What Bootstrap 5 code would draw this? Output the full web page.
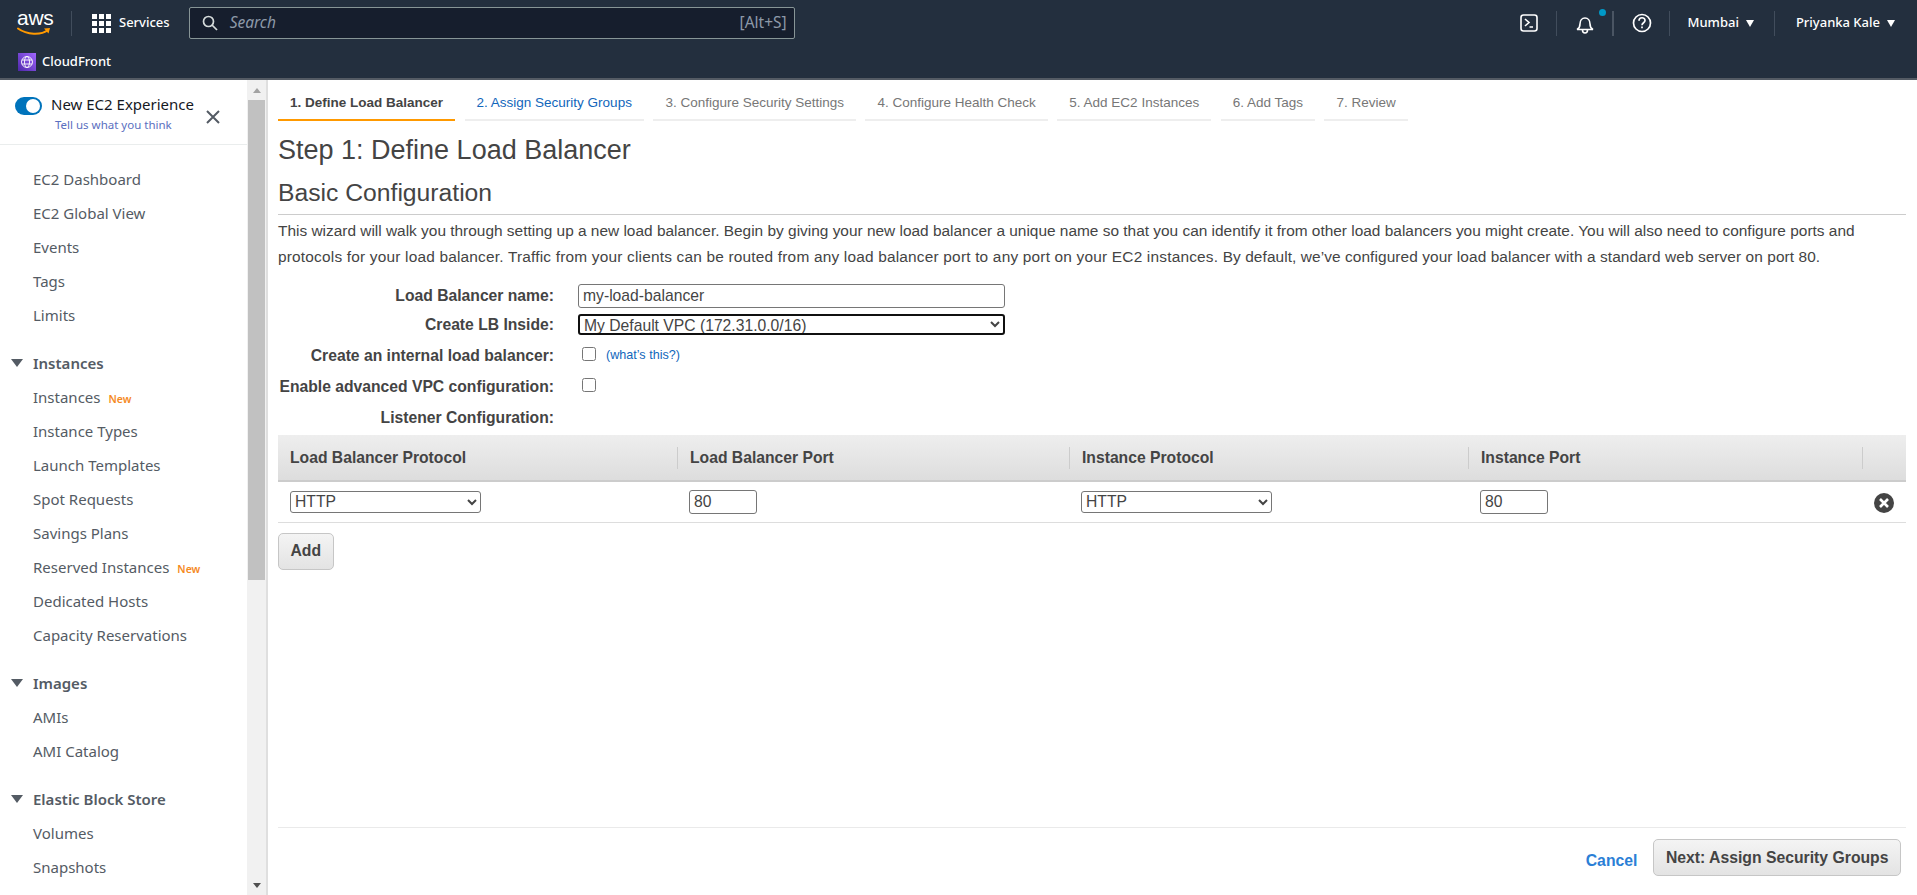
<!DOCTYPE html>
<html lang="en">
<head>
    <meta charset="UTF-8">
    <meta name="viewport" content="width=device-width, initial-scale=1.0">
    <title>Create Load Balancer</title>
    <link href="https://cdn.jsdelivr.net/npm/bootstrap@5.3.0/dist/css/bootstrap.min.css" rel="stylesheet">
    <style>
        html, body { height: 100%; overflow: hidden; }
        body { font-family: "Liberation Sans", Arial, sans-serif; color: #444; background: #fff; }
        .app-shell { height: 895px; }

        /* top bar */
        .top-bar { height: 80px; background: #232f3e; border-bottom: 2px solid #545b64; color: #fff; font-family: "Noto Sans", sans-serif; flex: none; }
        .top-row { height: 46px; }
        .sub-row { height: 32px; padding-left: 18px; font-size: 13px; font-weight: 500; }
        .aws-logo { width: 35px; margin-left: 17px; margin-top: -2px; line-height: 1; }
        .aws-word { display: block; font-family: "Liberation Sans", sans-serif; font-size: 21px; line-height: 17px; text-align: center; letter-spacing: -.3px; }
        .aws-smile { display: block; margin-top: 1px; }
        .bar-sep { width: 1px; height: 25px; background: #414d5c; flex: none; }
        .services-btn { font-size: 13px; font-weight: 500; }
        .search-box { width: 606px; height: 32px; background: #161e2d; border: 1px solid #879596; border-radius: 2px; font-size: 15.5px; color: #8d99a8; margin-left: 19px; padding: 0 7px 0 12px; }
        .search-word { font-style: italic; margin-left: 12px; }
        .user-menu { font-size: 13px; font-weight: 500; }
        .caret-down { width: 0; height: 0; border-left: 4.5px solid transparent; border-right: 4.5px solid transparent; border-top: 7px solid currentColor; display: inline-block; flex: none; }
        .bell-wrap { position: relative; width: 18px; height: 18px; }
        .bell-dot { position: absolute; width: 7px; height: 7px; background: #0099c7; border-radius: 50%; right: -12px; top: -5px; }

        /* side nav */
        .side-nav { width: 247px; flex: none; overflow: hidden; font-family: "Noto Sans", sans-serif; color: #545b64; font-size: 15px; }
        .exp-box { height: 65px; border-bottom: 1px solid #eaeded; padding: 15px 0 0 15px; color: #16191f; }
        .exp-toggle { width: 27px; height: 18px; border-radius: 9px; background: #0073bb; position: relative; flex: none; margin: 2px 9px 0 0; }
        .exp-knob { position: absolute; width: 14px; height: 14px; background: #fff; border-radius: 50%; right: 2px; top: 2px; }
        .exp-title { font-size: 15px; line-height: 18px; white-space: nowrap; }
        .exp-link { font-size: 11.5px; line-height: 14px; margin: 5px 0 0 4px; color: #5a6fc0; display: block; text-decoration: none; white-space: nowrap; }
        .nav-stack { padding-top: 17px; }
        .nav-line { display: block; height: 34px; line-height: 34px; padding-left: 33px; color: #545b64; text-decoration: none; white-space: nowrap; }
        .nav-head { display: flex; align-items: center; height: 34px; margin-top: 14px; font-weight: 600; white-space: nowrap; padding-left: 11px; }
        .nav-head .caret-down { border-left-width: 6px; border-right-width: 6px; border-top-width: 8px; margin-right: 10px; }
        .new-tag { color: #f58a1f; font-size: 10.5px; font-weight: 600; margin-left: 8px; }

        /* scrollbar strip */
        .fake-scroll { width: 21px; flex: none; background: #f1f1f1; border-right: 2px solid #dfdfdf; padding: 0 1px 0 1px; }
        .fake-thumb { height: 480px; background: #c1c1c1; }
        .arrow-cell { height: 20px; }
        .arrow-up, .arrow-down { width: 0; height: 0; border-left: 4.5px solid transparent; border-right: 4.5px solid transparent; }
        .arrow-up { border-bottom: 5px solid #a3a3a3; }
        .arrow-down { border-top: 5px solid #505050; }

        /* wizard */
        .wizard-pane { padding: 0 11px 0 10px; min-width: 0; }
        .wizard-tabs { gap: 9.5px; height: 41px; flex: none; }
        .wizard-tab { padding: 5px 12px 0; height: 41px; line-height: 36px; font-size: 13.5px; color: #777; border-bottom: 2px solid #eee; white-space: nowrap; text-decoration: none; }
        .wizard-tab.is-current { color: #444; font-weight: 700; border-bottom-color: #f90; }
        .wizard-tab.is-next { color: #1166bb; }
        .step-title { font-size: 27px; font-weight: 400; margin: 14px 0 0; line-height: 31px; color: #444; }
        .section-title { font-size: 24.7px; font-weight: 400; margin: 13px 0 0; padding-bottom: 7px; line-height: 28px; border-bottom: 1px solid #ccc; color: #444; }
        .intro-text { font-size: 15.43px; line-height: 25.5px; margin: 3px 0 0; color: #444; }
        .intro-rest { letter-spacing: .19px; }
        .intro-tail { letter-spacing: .08px; }
        .form-lines { margin-top: 13px; }
        .form-line { display: flex; align-items: center; font-size: 15.7px; }
        .form-line > label { width: 276px; text-align: right; font-weight: 700; margin-right: 24px; flex: none; color: #444; white-space: nowrap; }
        .name-input { width: 427px; height: 24px; border: 1px solid #767676; border-radius: 3px; font: 15.7px "Liberation Sans", sans-serif; padding: 1px 4px; color: #444; }
        .vpc-select { width: 427px; height: 21px; border: 2px solid #101010; border-radius: 3px; font: 15.7px "Liberation Sans", sans-serif; color: #444; background: #fff; padding: 0; }
        .info-link { font-size: 12.6px; color: #1166bb; margin-left: 10px; text-decoration: none; }
        .form-line input[type=checkbox] { margin: 0 0 3px 4px; width: 14px; height: 14px; }

        .listener-table { width: 1628px; table-layout: fixed; margin: 2px 0 0; font-size: 15.7px; }
        .listener-table th { height: 46px; padding: 0; vertical-align: middle; background: linear-gradient(#eee, #ddd); border-bottom: 2px solid #ccc; color: #444; }
        .head-cell { border-left: 1px solid #ccc; height: 22px; line-height: 22px; padding-left: 12px; }
        .first-head { border-left-color: transparent; padding-left: 11px; }
        .listener-table td { height: 41px; padding: 0 0 0 12px; vertical-align: middle; border-bottom: 1px solid #ddd; }
        .proto-select { width: 191px; height: 22px; font: 15.7px "Liberation Sans", sans-serif; color: #444; background: #fff; border: 1px solid #767676; border-radius: 3px; padding: 0; display: block; }
        .port-input { width: 68px; height: 24px; font: 15.7px "Liberation Sans", sans-serif; color: #444; border: 1px solid #767676; border-radius: 3px; padding: 1px 4px; display: block; }
        .grey-btn { background: linear-gradient(#f4f4f4, #e3e3e3); border: 1px solid #c6c6c6; border-radius: 5px; color: #444; font-weight: 700; font-size: 15.75px; padding: 0 11.5px; height: 37px; }
        .add-row { margin-top: 10px; }
        .remove-cell { text-align: right; padding-right: 12px !important; }
        .wizard-foot { margin-top: auto; border-top: 1px solid #eaeaea; height: 68px; padding: 11px 5px 0 0; gap: 16px; flex: none; }
        .cancel-link { color: #2b7fd6; font-weight: 700; font-size: 15.75px; text-decoration: none; }
    </style>
</head>
<body>
<div class="app-shell d-flex flex-column">
    <!-- top bar -->
    <header class="top-bar">
        <div class="top-row d-flex align-items-center">
            <div class="aws-logo">
                <span class="aws-word">aws</span>
                <svg class="aws-smile" width="35" height="9" viewBox="0 0 35 9"><path d="M1 1.500C10 8 24 8.500 31 3" fill="none" stroke="#f90" stroke-width="2" stroke-linecap="round"/><path d="M27 1.500L33 1 31.500 6.500z" fill="#f90"/></svg>
            </div>
            <span class="bar-sep" style="margin-left:19px"></span>
            <svg style="margin-left:20px" width="19" height="19" viewBox="0 0 19 19" fill="#fff"><rect x="0" y="0" width="5" height="5"/><rect x="7" y="0" width="5" height="5"/><rect x="14" y="0" width="5" height="5"/><rect x="0" y="7" width="5" height="5"/><rect x="7" y="7" width="5" height="5"/><rect x="14" y="7" width="5" height="5"/><rect x="0" y="14" width="5" height="5"/><rect x="7" y="14" width="5" height="5"/><rect x="14" y="14" width="5" height="5"/></svg>
            <span class="services-btn" style="margin-left:8px">Services</span>
            <div class="search-box d-flex align-items-center">
                <svg width="16" height="16" viewBox="0 0 16 16" fill="none" stroke="#d5dbdb" stroke-width="1.700"><circle cx="6.500" cy="6.500" r="5"/><path d="M10 10l5 5"/></svg>
                <span class="search-word">Search</span>
                <span class="ms-auto">[Alt+S]</span>
            </div>
            <div class="user-menu d-flex align-items-center ms-auto">
                <svg width="18" height="18" viewBox="0 0 18 18" fill="none" stroke="#fff" stroke-width="1.600"><rect x="1" y="1" width="16" height="16" rx="2.500"/><path d="M5 5l4 3.500L5 12M9.500 13H13"/></svg>
                <span class="bar-sep" style="margin-left:18px"></span>
                <div class="bell-wrap" style="margin-left:19px">
                    <svg width="18" height="18" viewBox="0 0 18 18" fill="none" stroke="#fff" stroke-width="1.600"><path d="M1 13.500c2-1 3-2.500 3-5.500 0-3.500 2-6 5-6s5 2.500 5 6c0 3 1 4.500 3 5.500zM6.500 14c0 4 5 4 5 0"/></svg>
                    <span class="bell-dot"></span>
                </div>
                <span class="bar-sep" style="margin-left:18px;width:2px;background:#4a5563"></span>
                <svg style="margin-left:18px" width="20" height="20" viewBox="0 0 20 20" fill="none" stroke="#fff" stroke-width="1.700"><circle cx="10" cy="10" r="8.500"/><path d="M7 7.800c0-4 6-4 6-.3 0 2.300-3 2.300-3 4.800"/><path d="M10 13.500v1.800"/></svg>
                <span class="bar-sep" style="margin-left:17px"></span>
                <span style="margin-left:17px">Mumbai</span>
                <span class="caret-down" style="margin-left:7px"></span>
                <span class="bar-sep" style="margin-left:20px"></span>
                <span style="margin-left:21px">Priyanka Kale</span>
                <span class="caret-down" style="margin:0 22px 0 7px"></span>
            </div>
        </div>
        <div class="sub-row d-flex align-items-center">
            <svg width="18" height="18" viewBox="0 0 18 18"><defs><linearGradient id="cfGrad" x1="0" y1="1" x2="1" y2="0"><stop offset="0" stop-color="#4d27a8"/><stop offset="1" stop-color="#a166ff"/></linearGradient></defs><rect width="18" height="18" fill="url(#cfGrad)"/><g fill="none" stroke="#fff" stroke-width=".9"><circle cx="9" cy="9" r="5.500"/><ellipse cx="9" cy="9" rx="2.500" ry="5.500"/><path d="M4 7h10M4 11h10"/></g></svg>
            <span style="margin-left:6px">CloudFront</span>
        </div>
    </header>

    <div class="d-flex flex-grow-1" style="min-height:0">
        <!-- left nav -->
        <nav class="side-nav">
            <div class="exp-box d-flex">
                <span class="exp-toggle"><span class="exp-knob"></span></span>
                <div>
                    <div class="exp-title">New EC2 Experience</div>
                    <a class="exp-link" href="#">Tell us what you think</a>
                </div>
                <svg style="margin:14px 0 0 11px" width="16" height="16" viewBox="0 0 16 16" fill="none" stroke="#545b64" stroke-width="2"><path d="M2 2l12 12M14 2L2 14"/></svg>
            </div>
            <div class="nav-stack">
                <a class="nav-line" href="#">EC2 Dashboard</a>
                <a class="nav-line" href="#">EC2 Global View</a>
                <a class="nav-line" href="#">Events</a>
                <a class="nav-line" href="#">Tags</a>
                <a class="nav-line" href="#">Limits</a>
                <div class="nav-head"><span class="caret-down"></span>Instances</div>
                <a class="nav-line" href="#">Instances<span class="new-tag">New</span></a>
                <a class="nav-line" href="#">Instance Types</a>
                <a class="nav-line" href="#">Launch Templates</a>
                <a class="nav-line" href="#">Spot Requests</a>
                <a class="nav-line" href="#">Savings Plans</a>
                <a class="nav-line" href="#">Reserved Instances<span class="new-tag">New</span></a>
                <a class="nav-line" href="#">Dedicated Hosts</a>
                <a class="nav-line" href="#">Capacity Reservations</a>
                <div class="nav-head"><span class="caret-down"></span>Images</div>
                <a class="nav-line" href="#">AMIs</a>
                <a class="nav-line" href="#">AMI Catalog</a>
                <div class="nav-head"><span class="caret-down"></span>Elastic Block Store</div>
                <a class="nav-line" href="#">Volumes</a>
                <a class="nav-line" href="#">Snapshots</a>
                <a class="nav-line" href="#">Lifecycle Manager</a>
            </div>
        </nav>
        <div class="fake-scroll d-flex flex-column">
            <div class="arrow-cell d-flex align-items-center justify-content-center"><span class="arrow-up"></span></div>
            <div class="fake-thumb"></div>
            <div class="arrow-cell d-flex align-items-center justify-content-center mt-auto"><span class="arrow-down"></span></div>
        </div>

        <!-- wizard -->
        <main class="wizard-pane flex-grow-1 d-flex flex-column">
            <div class="wizard-tabs d-flex">
                <a class="wizard-tab is-current" href="#">1. Define Load Balancer</a>
                <a class="wizard-tab is-next" href="#">2. Assign Security Groups</a>
                <a class="wizard-tab" href="#">3. Configure Security Settings</a>
                <a class="wizard-tab" href="#">4. Configure Health Check</a>
                <a class="wizard-tab" href="#">5. Add EC2 Instances</a>
                <a class="wizard-tab" href="#">6. Add Tags</a>
                <a class="wizard-tab" href="#">7. Review</a>
            </div>
            <h1 class="step-title">Step 1: Define Load Balancer</h1>
            <h2 class="section-title">Basic Configuration</h2>
            <p class="intro-text">This wizard will walk you through setting up a new load balancer. Begin by giving your new load balancer a unique name so that you can identify it from other load balancers you might create. You will also need to configure ports and <span class="intro-rest">protocols for your load balancer. Traffic from your clients can be routed from any load balancer port to any port on your EC2 instances. <span class="intro-tail">By default, we’ve configured your load balancer with a standard web server on port 80.</span></span></p>

            <div class="form-lines">
                <div class="form-line" style="height:27px"><label for="lbName">Load Balancer name:</label><input id="lbName" class="name-input" type="text" value="my-load-balancer"></div>
                <div class="form-line" style="height:31px"><label for="lbVpc">Create LB Inside:</label><select id="lbVpc" class="vpc-select"><option>My Default VPC (172.31.0.0/16)</option></select></div>
                <div class="form-line" style="height:31px"><label for="lbInternal">Create an internal load balancer:</label><input id="lbInternal" type="checkbox"><a class="info-link" href="#">(what’s this?)</a></div>
                <div class="form-line" style="height:31px"><label for="lbAdvanced">Enable advanced VPC configuration:</label><input id="lbAdvanced" type="checkbox"></div>
                <div class="form-line" style="height:31px"><label>Listener Configuration:</label></div>
            </div>

            <table class="listener-table">
                <colgroup><col style="width:399px"><col style="width:392px"><col style="width:399px"><col style="width:394px"><col style="width:44px"></colgroup>
                <thead>
                    <tr>
                        <th><div class="head-cell first-head">Load Balancer Protocol</div></th>
                        <th><div class="head-cell">Load Balancer Port</div></th>
                        <th><div class="head-cell">Instance Protocol</div></th>
                        <th><div class="head-cell">Instance Port</div></th>
                        <th><div class="head-cell"></div></th>
                    </tr>
                </thead>
                <tbody>
                    <tr>
                        <td><select class="proto-select"><option>HTTP</option></select></td>
                        <td><input class="port-input" type="text" value="80"></td>
                        <td><select class="proto-select"><option>HTTP</option></select></td>
                        <td><input class="port-input" type="text" value="80"></td>
                        <td class="remove-cell"><svg width="20" height="20" viewBox="0 0 20 20"><circle cx="10" cy="10" r="10" fill="#444"/><path d="M6 6l8 8M14 6l-8 8" stroke="#fff" stroke-width="2.600"/></svg></td>
                    </tr>
                </tbody>
            </table>
            <div class="add-row"><button class="grey-btn" type="button">Add</button></div>

            <div class="wizard-foot d-flex justify-content-end align-items-start">
                <a class="cancel-link" href="#" style="margin-top:10px">Cancel</a>
                <button class="grey-btn" type="button">Next: Assign Security Groups</button>
            </div>
        </main>
    </div>
</div>
<script src="https://cdn.jsdelivr.net/npm/bootstrap@5.3.0/dist/js/bootstrap.bundle.min.js"></script>
</body>
</html>
